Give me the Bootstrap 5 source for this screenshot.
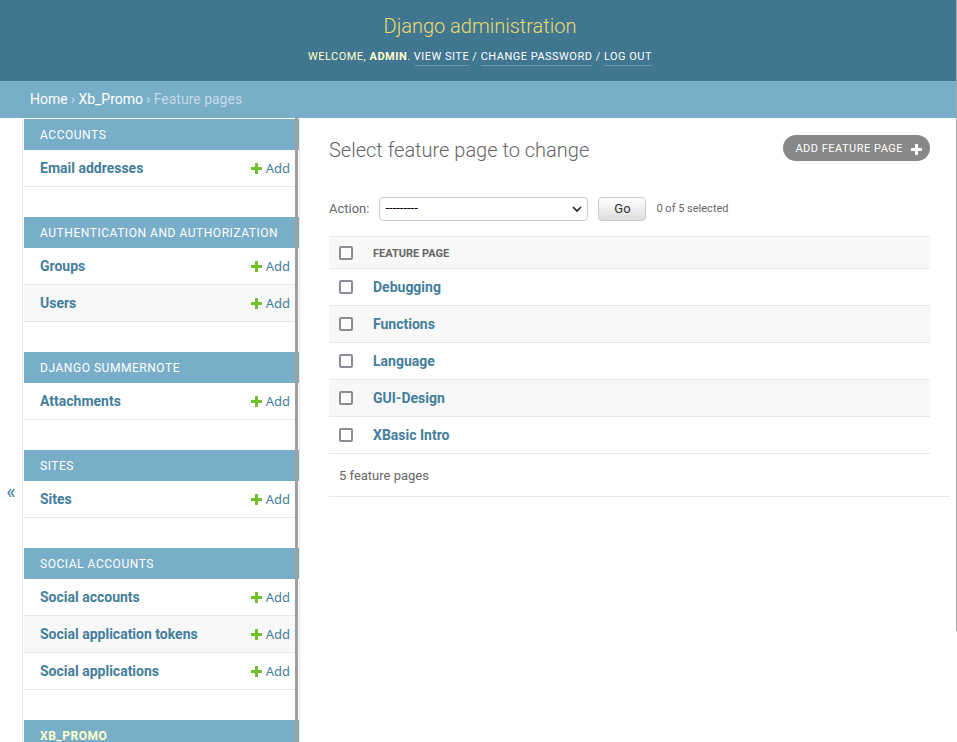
<!DOCTYPE html>
<html lang="en">
<head>
<meta charset="utf-8">
<meta name="viewport" content="width=device-width, initial-scale=1">
<title>Select feature page to change | Django administration</title>
<link href="https://cdn.jsdelivr.net/npm/bootstrap@5.3.0/dist/css/bootstrap.min.css" rel="stylesheet">
<style>
  body { font-family: Roboto, "Liberation Sans", sans-serif; font-size: 14px; line-height: 20px; color: #666; background: #fff; }
  a { color: #447e9b; text-decoration: none; }
  .caps { text-transform: uppercase; letter-spacing: .045em; }
  .site-header { background: #417690; color: #ffc; padding: 11px 40px 15px 43px; }
  .site-name { font-size: 20px; line-height: 30px; font-weight: 300; color: #ecdb6b; margin: 0 0 7px; }
  .user-tools { font-size: 11px; line-height: 17px; }
  .user-tools a { color: #fff; border-bottom: 1px solid #6b95ab; display: inline-block; }
  .crumbs { background: #79aec8; color: #c4dce8; padding: 8px 30px 9px; }
  .crumbs .breadcrumb-item { padding: 0; color: #c4dce8; }
  .crumbs .breadcrumb-item a { color: #fff; }
  .crumbs .breadcrumb-item + .breadcrumb-item::before { content: "\203A\00a0"; padding: 0 0 0 3px; color: #c4dce8; }
  .nav-toggle { width: 23px; border: 0; border-right: 1px solid #eaeaea; background: #fff; color: #447e9b; font-size: 20px; padding: 5px 0 0; }
  .side-nav { width: 277px; padding: 1px 0 0 1px; border-right: 1px solid #eaeaea; }
  .app-group { margin-bottom: 30px; }
  .app-group h2 { background: #79aec8; font-size: 12px; line-height: 15px; font-weight: 400; padding: 9px 16px 7px; margin: 0; }
  .app-group h2 a { color: #fff; }
  .app-group h2.current a { color: #ffc; font-weight: 700; }
  .app-group li { padding: 8px 9px 8px 16px; border-bottom: 1px solid #e8e8e8; }
  .app-group li:nth-child(even), .result-table tbody tr:nth-child(even) { background: #f8f8f8; }
  .add-link { font: 13px/20px "Noto Sans", sans-serif; }
  .scroll-thumb { background: #a0a0a0; width: 3px; top: 0; right: 1px; }
  .page-thumb { background: #a6a6a6; width: 1px; height: 85vh; top: 0; right: 0; }
  .content { padding: 17px 27px 0 29px; }
  .content h1 { font-size: 20px; line-height: 30px; font-weight: 300; }
  .add-object { font-size: 11px; line-height: 16px; color: #fff; background: #888; padding: 6px 8px 4px 12px; }
  .actions { font-size: 13px; margin: 32px 0 15px; gap: 10px; }
  .action-select { width: 209px; height: 24px; font-size: 13px; line-height: 20px; color: #000; padding: 0 20px 2px 5px; border: 1px solid #ccc; border-radius: 4px; background-size: 10px 8px; background-position: right 5px center;
    background-image: url("data:image/svg+xml,%3csvg xmlns='http://www.w3.org/2000/svg' viewBox='0 0 10 8'%3e%3cpath fill='none' stroke='%23222' stroke-width='1.7' d='m1 2 4 4 4-4'/%3e%3c/svg%3e"); }
  .go { width: 48px; height: 24px; font-size: 13px; line-height: 20px; color: #333; padding: 1px 0; border: 1px solid #ccc; border-radius: 4px; background: linear-gradient(#fff, #ddd); }
  .selected-count { font-size: 11px; }
  .result-table { border-top: 1px solid #e8e8e8; }
  .result-table tr { border-bottom: 1px solid #e8e8e8; }
  .result-table thead { background: #f8f8f8; }
  .result-table th, .result-table td { padding: 8px 10px; }
  .result-table thead th { font-size: 11px; line-height: 15px; padding: 9px 10px 7px; }
  .result-table thead .check-cell { width: 34px; padding: 8px 10px; }
  .form-check-input { width: 14px; height: 14px; margin: 0; border: 2px solid #8b8b94; display: block; }
  .form-check-input[type=checkbox] { border-radius: 2px; }
  .paginator { font-size: 13px; line-height: 20px; padding: 12px 10px 10px; margin-right: -20px; border-bottom: 1px solid #e8e8e8; }
</style>
<script src="https://cdn.jsdelivr.net/npm/bootstrap@5.3.0/dist/js/bootstrap.bundle.min.js"></script>
</head>
<body>
<svg class="d-none" aria-hidden="true">
  <symbol id="plus" viewBox="0 0 11 11"><path fill="currentColor" d="M4.600 0h1.800q.6 0 .6.600v3.400h3.400q.6 0 .6.600v1.800q0 .6-.6.6H7v3.400q0 .6-.6.600H4.600q-.6 0-.6-.600V7H.6Q0 7 0 6.400V4.600Q0 4 .6 4H4V.600Q4 0 4.600 0z"/></symbol>
</svg>
<div class="d-flex flex-column vh-100 overflow-hidden position-relative">
  <header class="site-header text-center flex-shrink-0">
    <div class="site-name"><a href="#" class="text-reset">Django administration</a></div>
    <div class="user-tools caps">Welcome, <strong>admin</strong>. <a href="#">View site</a> / <a href="#">Change password</a> / <a href="#">Log out</a></div>
  </header>
  <nav class="crumbs flex-shrink-0" aria-label="Breadcrumb">
    <ol class="breadcrumb mb-0">
      <li class="breadcrumb-item"><a href="#">Home</a></li>
      <li class="breadcrumb-item"><a href="#">Xb_Promo</a></li>
      <li class="breadcrumb-item active" aria-current="page">Feature pages</li>
    </ol>
  </nav>
  <div class="d-flex flex-grow-1 overflow-hidden">
    <button type="button" class="nav-toggle vh-100 flex-shrink-0 d-flex align-items-center justify-content-center" aria-label="Toggle navigation"><span>«</span></button>
    <div class="side-nav flex-shrink-0 position-relative overflow-hidden">
      <nav aria-label="Applications">
        <section class="app-group">
          <h2 class="caps"><a href="#">Accounts</a></h2>
          <ul class="list-unstyled mb-0">
            <li class="d-flex justify-content-between"><a href="#" class="fw-bold">Email addresses</a><a href="#" class="add-link d-flex align-items-center gap-1"><svg width="11" height="11" color="#70bf2b"><use href="#plus"/></svg>Add</a></li>
          </ul>
        </section>
        <section class="app-group">
          <h2 class="caps"><a href="#">Authentication and Authorization</a></h2>
          <ul class="list-unstyled mb-0">
            <li class="d-flex justify-content-between"><a href="#" class="fw-bold">Groups</a><a href="#" class="add-link d-flex align-items-center gap-1"><svg width="11" height="11" color="#70bf2b"><use href="#plus"/></svg>Add</a></li>
            <li class="d-flex justify-content-between"><a href="#" class="fw-bold">Users</a><a href="#" class="add-link d-flex align-items-center gap-1"><svg width="11" height="11" color="#70bf2b"><use href="#plus"/></svg>Add</a></li>
          </ul>
        </section>
        <section class="app-group">
          <h2 class="caps"><a href="#">Django Summernote</a></h2>
          <ul class="list-unstyled mb-0">
            <li class="d-flex justify-content-between"><a href="#" class="fw-bold">Attachments</a><a href="#" class="add-link d-flex align-items-center gap-1"><svg width="11" height="11" color="#70bf2b"><use href="#plus"/></svg>Add</a></li>
          </ul>
        </section>
        <section class="app-group">
          <h2 class="caps"><a href="#">Sites</a></h2>
          <ul class="list-unstyled mb-0">
            <li class="d-flex justify-content-between"><a href="#" class="fw-bold">Sites</a><a href="#" class="add-link d-flex align-items-center gap-1"><svg width="11" height="11" color="#70bf2b"><use href="#plus"/></svg>Add</a></li>
          </ul>
        </section>
        <section class="app-group">
          <h2 class="caps"><a href="#">Social Accounts</a></h2>
          <ul class="list-unstyled mb-0">
            <li class="d-flex justify-content-between"><a href="#" class="fw-bold">Social accounts</a><a href="#" class="add-link d-flex align-items-center gap-1"><svg width="11" height="11" color="#70bf2b"><use href="#plus"/></svg>Add</a></li>
            <li class="d-flex justify-content-between"><a href="#" class="fw-bold">Social application tokens</a><a href="#" class="add-link d-flex align-items-center gap-1"><svg width="11" height="11" color="#70bf2b"><use href="#plus"/></svg>Add</a></li>
            <li class="d-flex justify-content-between"><a href="#" class="fw-bold">Social applications</a><a href="#" class="add-link d-flex align-items-center gap-1"><svg width="11" height="11" color="#70bf2b"><use href="#plus"/></svg>Add</a></li>
          </ul>
        </section>
        <section class="app-group mb-0">
          <h2 class="caps current"><a href="#">Xb_Promo</a></h2>
        </section>
      </nav>
      <div class="scroll-thumb position-absolute h-100"></div>
    </div>
    <main class="content flex-grow-1">
      <div class="d-flex justify-content-between align-items-start">
        <h1 class="mb-0">Select feature page to change</h1>
        <a href="#" class="add-object caps rounded-pill d-flex align-items-center gap-2">Add feature page<svg width="11" height="11"><use href="#plus"/></svg></a>
      </div>
      <form>
        <div class="actions d-flex align-items-center">
          <label for="action">Action:</label>
          <select id="action" class="action-select form-select"><option>---------</option><option>Delete selected feature pages</option></select>
          <button type="button" class="go">Go</button>
          <span class="selected-count">0 of 5 selected</span>
        </div>
        <table class="result-table w-100">
          <thead><tr><th class="check-cell"><input type="checkbox" class="form-check-input" aria-label="Select all"></th><th scope="col" class="text-uppercase">Feature page</th></tr></thead>
          <tbody>
            <tr><td><input type="checkbox" class="form-check-input" aria-label="Select Debugging"></td><th scope="row"><a href="#">Debugging</a></th></tr>
            <tr><td><input type="checkbox" class="form-check-input" aria-label="Select Functions"></td><th scope="row"><a href="#">Functions</a></th></tr>
            <tr><td><input type="checkbox" class="form-check-input" aria-label="Select Language"></td><th scope="row"><a href="#">Language</a></th></tr>
            <tr><td><input type="checkbox" class="form-check-input" aria-label="Select GUI-Design"></td><th scope="row"><a href="#">GUI-Design</a></th></tr>
            <tr><td><input type="checkbox" class="form-check-input" aria-label="Select XBasic Intro"></td><th scope="row"><a href="#">XBasic Intro</a></th></tr>
          </tbody>
        </table>
        <p class="paginator mb-0">5 feature pages</p>
      </form>
    </main>
  </div>
  <div class="page-thumb position-absolute"></div>
</div>
</body>
</html>
